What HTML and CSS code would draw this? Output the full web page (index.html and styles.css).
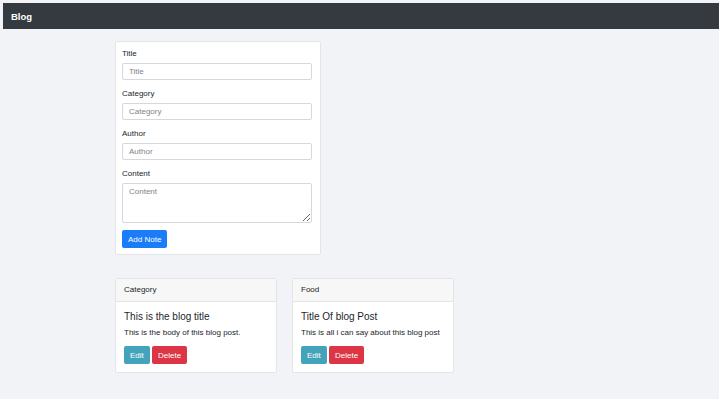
FILE: index.html
```html
<!DOCTYPE html>
<html lang="en">

<head>
    <meta charset="UTF-8">
    <title>Blog</title>
    <link rel="stylesheet" href="styles.css">
</head>

<body>
    <nav class="navbar">
        <span class="brand">Blog</span>
    </nav>

    <div class="contain">
        <form class="note-form">
            <div class="group">
                <label for="title">Title</label>
                <input type="text" id="title" placeholder="Title">
            </div>
            <div class="group">
                <label for="category">Category</label>
                <input type="text" id="category" placeholder="Category">
            </div>
            <div class="group">
                <label for="author">Author</label>
                <input type="text" id="author" placeholder="Author">
            </div>
            <div class="group">
                <label for="content">Content</label>
                <textarea id="content" placeholder="Content"></textarea>
            </div>
            <button type="button" class="btn btn-primary">Add Note</button>
        </form>

        <div class="posts">
            <div class="card">
                <div class="card-header">Category</div>
                <div class="card-body">
                    <h5 class="card-title">This is the blog title</h5>
                    <p class="card-text">This is the body of this blog post.</p>
                    <button class="btn btn-info">Edit</button>
                    <button class="btn btn-danger">Delete</button>
                </div>
            </div>
            <div class="card">
                <div class="card-header">Food</div>
                <div class="card-body">
                    <h5 class="card-title">Title Of blog Post</h5>
                    <p class="card-text">This is all i can say about this blog post</p>
                    <button class="btn btn-info">Edit</button>
                    <button class="btn btn-danger">Delete</button>
                </div>
            </div>
        </div>
    </div>
</body>

</html>
```

FILE: styles.css
```css
* {
    box-sizing: border-box;
}

body {
    margin: 0;
    padding: 3px 0 0 3px;
    font-family: "Liberation Sans", Arial, sans-serif;
    font-size: 8px;
    color: #212529;
    background-color: #f2f3f7;
}

.navbar {
    height: 26px;
    padding: 0 8px;
    display: flex;
    align-items: center;
    background-color: #343a40;
}

.brand {
    color: #fff;
    font-size: 9.5px;
    font-weight: bold;
}

.contain {
    padding: 12px 0 0 112px;
}

.note-form {
    width: 206px;
    padding: 7px 8px 6px 6px;
    background-color: #fff;
    border: 1px solid #e3e5e8;
    border-radius: 2px;
}

.group {
    margin-bottom: 9px;
}

.group:last-of-type {
    margin-bottom: 7px;
}

label {
    display: block;
    line-height: 10px;
    margin-bottom: 4px;
}

input,
textarea {
    display: block;
    width: 100%;
    height: 17px;
    padding: 0 6px;
    font-family: inherit;
    font-size: 8px;
    color: #495057;
    border: 1px solid #d6d9dc;
    border-radius: 2px;
    background-color: #fff;
}

textarea {
    height: 40px;
    padding: 3px 6px;
}

::placeholder {
    color: #7d848b;
}

.btn {
    height: 18px;
    padding: 0 6px;
    font-family: inherit;
    font-size: 8px;
    color: #fff;
    border: none;
    border-radius: 2px;
    cursor: pointer;
}

.btn-primary {
    background-color: #1a7cf8;
}

.btn-info {
    background-color: #43a3ba;
}

.btn-danger {
    background-color: #dc3545;
}

.posts {
    display: flex;
    gap: 15px;
    margin-top: 23px;
}

.card {
    width: 162px;
    background-color: #fff;
    border: 1px solid #e3e5e8;
    border-radius: 2px;
}

.card-header {
    padding: 6px 8px;
    line-height: 10px;
    background-color: #f7f7f7;
    border-bottom: 1px solid #e3e5e8;
}

.card-body {
    padding: 8px 8px 8px;
}

.card-title {
    margin: 0 0 5px;
    font-size: 10px;
    font-weight: 500;
    line-height: 13px;
}

.card-text {
    margin: 0 0 8px;
    line-height: 10px;
}
```
